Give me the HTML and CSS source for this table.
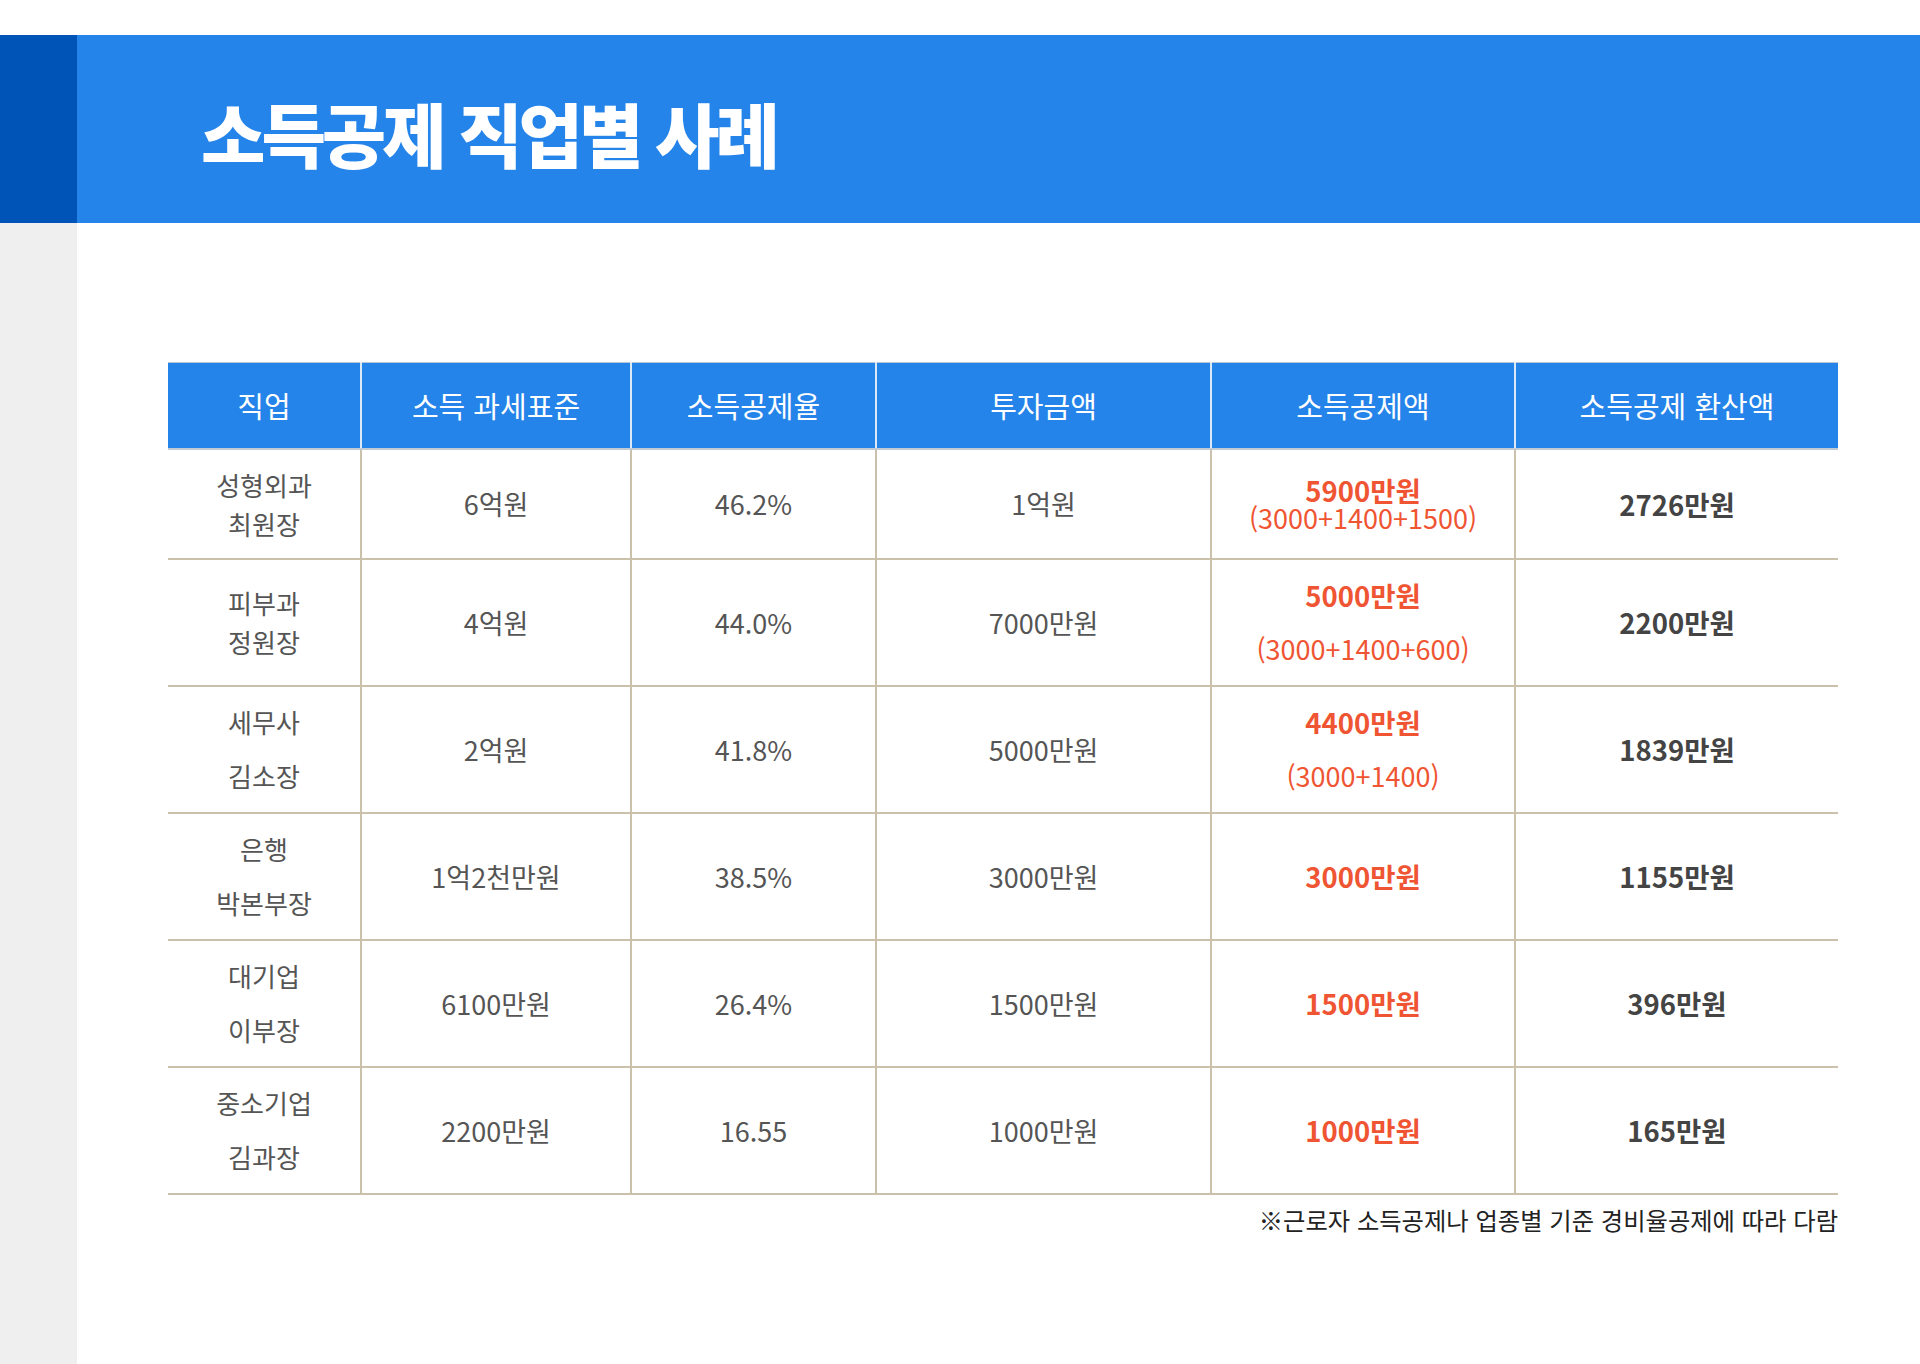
FILE: index.html
```html
<!DOCTYPE html>
<html lang="ko">
<head>
<meta charset="utf-8">
<title>소득공제 직업별 사례</title>
<link rel="stylesheet" href="styles.css">
</head>
<body>
<div class="page">
  <header class="header">
    <div class="stripe"></div>
    <div class="banner"><h1 class="title">소득공제 직업별 사례</h1></div>
  </header>
  <div class="main">
    <aside class="side"></aside>
    <section class="content">
      <table class="tbl">
        <colgroup>
          <col class="c1"><col class="c2"><col class="c3"><col class="c4"><col class="c5"><col class="c6">
        </colgroup>
        <thead>
          <tr>
            <th>직업</th><th>소득 과세표준</th><th>소득공제율</th><th>투자금액</th><th>소득공제액</th><th>소득공제 환산액</th>
          </tr>
        </thead>
        <tbody>
          <tr class="r1">
            <td class="job"><div class="two tight">성형외과<br>최원장</div></td>
            <td>6억원</td><td>46.2%</td><td>1억원</td>
            <td><div class="red tightest"><div class="rb">5900만원</div><div class="rs">(3000+1400+1500)</div></div></td>
            <td class="bold">2726만원</td>
          </tr>
          <tr>
            <td class="job"><div class="two tight">피부과<br>정원장</div></td>
            <td>4억원</td><td>44.0%</td><td>7000만원</td>
            <td><div class="red wide"><div class="rb">5000만원</div><div class="rs">(3000+1400+600)</div></div></td>
            <td class="bold">2200만원</td>
          </tr>
          <tr>
            <td class="job"><div class="two wide">세무사<br>김소장</div></td>
            <td>2억원</td><td>41.8%</td><td>5000만원</td>
            <td><div class="red wide"><div class="rb">4400만원</div><div class="rs">(3000+1400)</div></div></td>
            <td class="bold">1839만원</td>
          </tr>
          <tr>
            <td class="job"><div class="two wide">은행<br>박본부장</div></td>
            <td>1억2천만원</td><td>38.5%</td><td>3000만원</td>
            <td class="redb">3000만원</td>
            <td class="bold">1155만원</td>
          </tr>
          <tr>
            <td class="job"><div class="two wide">대기업<br>이부장</div></td>
            <td>6100만원</td><td>26.4%</td><td>1500만원</td>
            <td class="redb">1500만원</td>
            <td class="bold">396만원</td>
          </tr>
          <tr>
            <td class="job"><div class="two wide">중소기업<br>김과장</div></td>
            <td>2200만원</td><td>16.55</td><td>1000만원</td>
            <td class="redb">1000만원</td>
            <td class="bold">165만원</td>
          </tr>
        </tbody>
      </table>
      <p class="note">※근로자 소득공제나 업종별 기준 경비율공제에 따라 다람</p>
    </section>
  </div>
</div>
</body>
</html>
```

FILE: styles.css
```css
html, body {
  margin: 0;
  padding: 0;
  background: #ffffff;
}
body {
  font-family: "Noto Sans CJK KR", "Noto Sans", sans-serif;
  color: #555555;
}
.page {
  width: 1920px;
  height: 1364px;
  padding-top: 35px;
  box-sizing: border-box;
  display: flex;
  flex-direction: column;
  overflow: hidden;
}
.header {
  display: flex;
  height: 188px;
  flex: none;
}
.stripe {
  width: 77px;
  background: #0054b8;
}
.banner {
  flex: 1;
  background: #2484ea;
  display: flex;
  align-items: center;
  padding-left: 124px;
  padding-top: 8px;
  box-sizing: border-box;
}
.title {
  margin: 0;
  color: #ffffff;
  font-size: 70px;
  font-weight: 900;
  letter-spacing: -4px;
  line-height: 1;
}
.main {
  flex: 1;
  display: flex;
}
.side {
  width: 77px;
  background: #efefef;
  flex: none;
}
.content {
  flex: 1;
  padding-top: 139px;
  padding-left: 91px;
}
.tbl {
  width: 1670px;
  border-collapse: collapse;
  table-layout: fixed;
}
.c1 { width: 193px; }
.c2 { width: 270px; }
.c3 { width: 245px; }
.c4 { width: 335px; }
.c5 { width: 304px; }
.c6 { width: 323px; }
.tbl th {
  height: 86px;
  padding: 0;
  background: #2484ea;
  color: #ffffff;
  font-size: 29px;
  font-weight: 400;
  border-top: 1px solid #b9c6d3;
  border-bottom: 2px solid #c2cbd4;
  border-left: 2px solid #dbe8f6;
  text-align: center;
  vertical-align: middle;
  box-sizing: border-box;
}
.tbl th:first-child { border-left: none; }
.tbl td {
  height: 127px;
  padding: 0;
  text-align: center;
  vertical-align: middle;
  font-size: 27px;
  color: #555555;
  border-bottom: 2px solid #cbc1ab;
  border-left: 2px solid #cbc1ab;
  box-sizing: border-box;
}
.tbl td:first-child { border-left: none; }
.tbl td.job { font-size: 26px; }
.tbl tr.r1 td { height: 110px; }
.two.tight { line-height: 39px; }
.two.wide { line-height: 54px; }
.red { color: #ef5532; }
.rb {
  font-weight: 700;
  font-size: 27.5px;
}
.rs {
  font-size: 27px;
}
.red.tightest .rb,
.red.tightest .rs { line-height: 28px; height: 28px; }
.red.wide .rb,
.red.wide .rs { line-height: 53px; }
.tbl td.redb {
  color: #ef5532;
  font-weight: 700;
  font-size: 27.5px;
}
.tbl td.bold {
  color: #444444;
  font-weight: 700;
  font-size: 27.5px;
}
.note {
  width: 1670px;
  margin: 8px 0 0;
  text-align: right;
  font-size: 24.3px;
  line-height: 34px;
  color: #222222;
}
```
